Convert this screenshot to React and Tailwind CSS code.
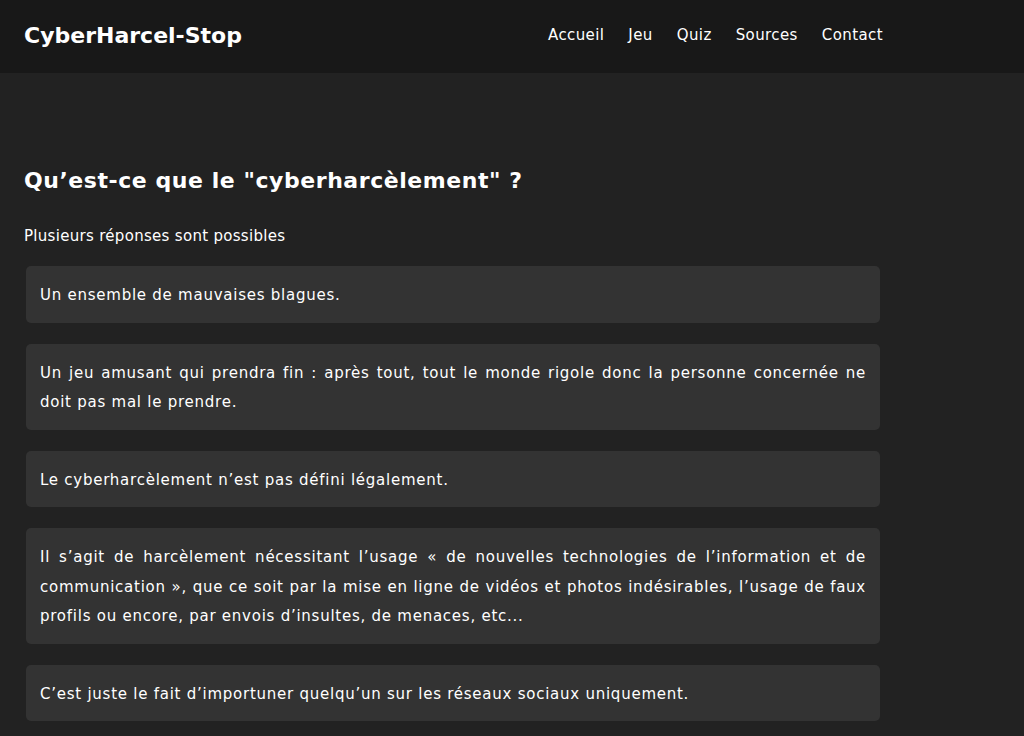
const answers = [
  'Un ensemble de mauvaises blagues.',
  'Un jeu amusant qui prendra fin : après tout, tout le monde rigole donc la personne concernée ne doit pas mal le prendre.',
  'Le cyberharcèlement n’est pas défini légalement.',
  'Il s’agit de harcèlement nécessitant l’usage « de nouvelles technologies de l’information et de communication », que ce soit par la mise en ligne de vidéos et photos indésirables, l’usage de faux profils ou encore, par envois d’insultes, de menaces, etc...',
  'C’est juste le fait d’importuner quelqu’un sur les réseaux sociaux uniquement.',
]

const links = ['Accueil', 'Jeu', 'Quiz', 'Sources', 'Contact']

export default function App() {
  return (
    <div className="min-h-screen bg-[#222222] text-white font-['DejaVu_Sans',sans-serif]">
      <header className="h-[73px] bg-[#181818] flex items-center pb-[3px]">
        <div className="w-[859px] ml-6 flex items-center justify-between">
          <div className="text-[22px] font-bold">CyberHarcel-Stop</div>
          <nav className="flex gap-6 text-[15px] tracking-[0.4px]">
            {links.map(l => <a key={l} href="#">{l}</a>)}
          </nav>
        </div>
      </header>

      <main className="w-[858px] ml-6 pt-[93px]">
        <h1 className="text-[22px] font-bold leading-[30px] tracking-[0.55px]">Qu’est-ce que le "cyberharcèlement" ?</h1>
        <p className="mt-[29px] text-[15px] leading-[22px] tracking-[0.3px]">Plusieurs réponses sont possibles</p>
        <div className="mt-[19px] ml-[2px] w-[854px] flex flex-col gap-[21px]">
          {answers.map(a => (
            <div key={a} className="bg-[#333333] rounded-[5px] px-[14px] pt-[15px] pb-[12px] text-[15px] leading-[29.5px] tracking-[0.75px] text-justify">
              {a}
            </div>
          ))}
        </div>
      </main>
    </div>
  )
}
